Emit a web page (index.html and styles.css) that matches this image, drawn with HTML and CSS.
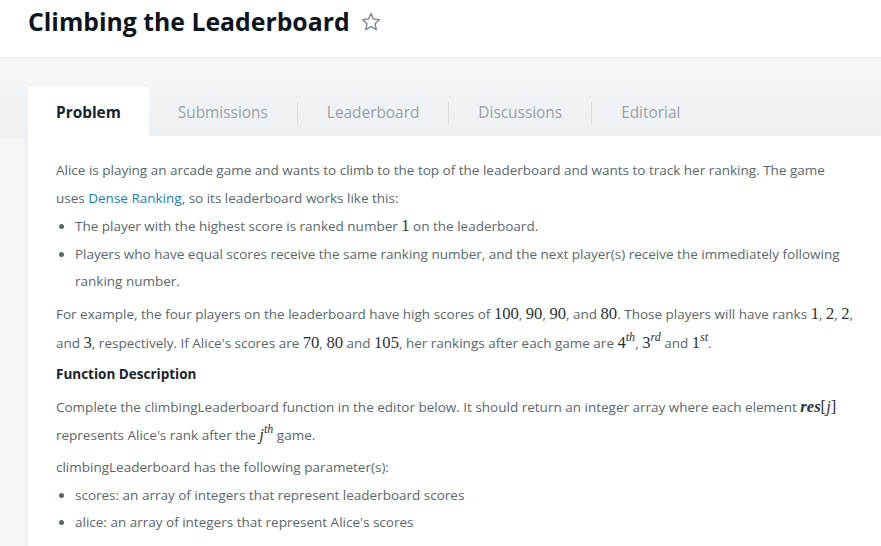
FILE: index.html
```html
<!DOCTYPE html>
<html>
<head>
<meta charset="utf-8">
<link rel="stylesheet" href="styles.css">
</head>
<body>
<header class="top">
  <h1 class="title">Climbing the Leaderboard
    <svg class="star" width="22" height="22" viewBox="0 0 24 24"><path d="M12 2.8l2.75 5.9 6.45.75-4.8 4.4 1.3 6.35L12 17l-5.7 3.2 1.3-6.35-4.8-4.4 6.45-.75z" fill="none" stroke="#7d8a99" stroke-width="1.6" stroke-linejoin="round"/></svg>
  </h1>
</header>
<main class="stage">
  <nav class="tabs">
    <span class="tab active">Problem</span>
    <span class="tab">Submissions</span>
    <span class="sep"></span>
    <span class="tab">Leaderboard</span>
    <span class="sep"></span>
    <span class="tab">Discussions</span>
    <span class="sep"></span>
    <span class="tab">Editorial</span>
  </nav>
  <section class="panel">
    <p>Alice is playing an arcade game and wants to climb to the top of the leaderboard and wants to track her ranking. The game uses <span class="link">Dense Ranking</span>, so its leaderboard works like this:</p>
    <ul class="tight">
      <li>The player with the highest score is ranked number <span class="m">1</span> on the leaderboard.</li>
      <li>Players who have equal scores receive the same ranking number, and the next player(s) receive the immediately following ranking number.</li>
    </ul>
    <p>For example, the four players on the leaderboard have high scores of <span class="m">100</span>, <span class="m">90</span>, <span class="m">90</span>, and <span class="m">80</span>. Those players will have ranks <span class="m">1</span>, <span class="m">2</span>, <span class="m">2</span>, and <span class="m">3</span>, respectively. If Alice's scores are <span class="m">70</span>, <span class="m">80</span> and <span class="m">105</span>, her rankings after each game are <span class="m">4<sup>th</sup></span>, <span class="m">3<sup>rd</sup></span> and <span class="m">1<sup>st</sup></span>.</p>
    <h3 class="sub">Function Description</h3>
    <p>Complete the climbingLeaderboard function in the editor below. It should return an integer array where each element <span class="m bi">res</span><span class="m">[<i>j</i>]</span> represents Alice's rank after the <span class="m"><i>j</i><sup>th</sup></span> game.</p>
    <p>climbingLeaderboard has the following parameter(s):</p>
    <ul class="tight">
      <li>scores: an array of integers that represent leaderboard scores</li>
      <li>alice: an array of integers that represent Alice's scores</li>
    </ul>
  </section>
</main>
</body>
</html>
```
FILE: styles.css
```css
html, body {
  margin: 0;
  padding: 0;
  height: 100%;
  overflow: hidden;
}
body {
  font-family: "Open Sans", "Liberation Sans", sans-serif;
  background: #f3f5f7;
}
.top {
  background: #fff;
  height: 58px;
  padding: 0 28px;
  border-bottom: 1px solid #eceef1;
  box-sizing: border-box;
}
.title {
  margin: 0;
  padding-top: 3px;
  font-size: 24.8px;
  font-weight: 700;
  color: #0e141e;
  display: flex;
  align-items: center;
  gap: 10px;
  line-height: 36px;
}
.star {
  margin-top: 1px;
}
.stage {
  padding-top: 29px;
}
.tabs {
  display: flex;
  align-items: center;
  height: 49px;
  background: linear-gradient(#f1f4f7, #eef1f4);
  box-shadow: 0 2px 3px rgba(0,0,0,0.04);
  padding-left: 28px;
}
.tab {
  font-size: 15.4px;
  color: #98a1ab;
  padding: 0 29px;
  height: 49px;
  line-height: 51px;
}
.tab.active {
  background: #fff;
  color: #1b2330;
  font-weight: 700;
  padding: 0 28px;
}
.sep {
  width: 1px;
  height: 21px;
  margin-top: 2px;
  background: #d7dce1;
}
.panel {
  background: #fff;
  margin-left: 28px;
  padding: 21px 24px 40px 28px;
  color: #5b6670;
  font-size: 13.5px;
  line-height: 27.6px;
  box-shadow: -2px 0 4px rgba(0,0,0,0.03);
  min-height: 500px;
}
.panel p {
  margin: 4px 0 0 0;
}
.panel p:first-child {
  margin-top: 0;
}
.panel ul {
  margin: 0;
  padding-left: 19px;
}
.link {
  color: #1c7cc2;
}
.m {
  font-family: "Liberation Serif", "DejaVu Serif", serif;
  font-size: 16.6px;
  color: #2c333b;
}
.m sup {
  font-style: italic;
  font-size: 12px;
  line-height: 0;
  vertical-align: 7px;
}
.bi {
  font-style: italic;
  font-weight: 700;
}
.sub {
  margin: 4px 0 0 0;
  font-size: 13.5px;
  font-weight: 700;
  color: #1b2330;
  line-height: 27.6px;
}
```
